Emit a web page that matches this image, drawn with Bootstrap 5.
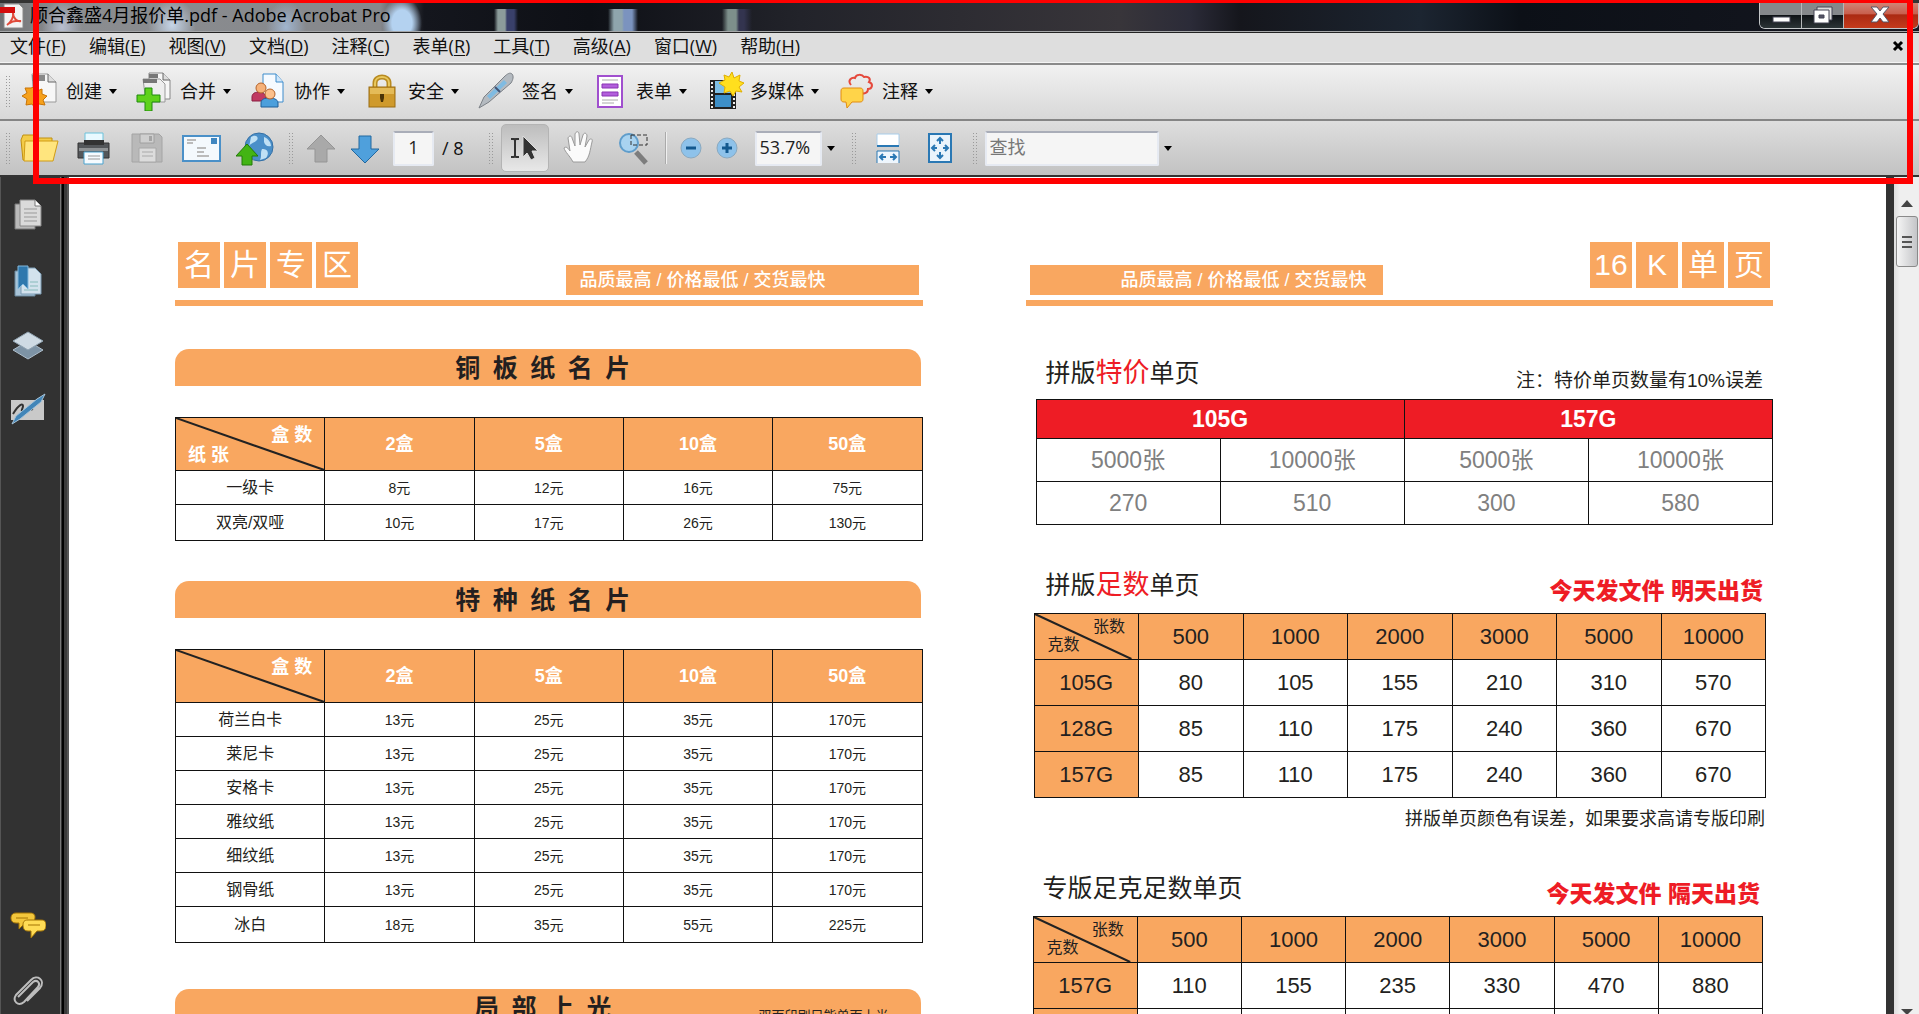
<!DOCTYPE html>
<html lang="zh-CN">
<head>
<meta charset="utf-8">
<meta name="viewport" content="width=device-width, initial-scale=1">
<title>顺合鑫盛4月报价单.pdf - Adobe Acrobat Pro</title>
<link rel="stylesheet" href="https://cdn.jsdelivr.net/npm/bootstrap@5.3.0/dist/css/bootstrap.min.css">
<style>
  :root { --orange: #f9a760; --ink: #231f20; --red: #ee1c25; }
  body { font-family: "Open Sans", "Noto Sans CJK SC", sans-serif; font-size: 18px; line-height: 24px; color: #111; background: #323232; }
  button { color: inherit; }
  .icon-btn { width: 40px; height: 40px; }
  .icon-btn svg, .menu-tool svg { display: block; width: 40px; height: 40px; flex: none; }

  /* window title */
  .title-strip {
    height: 33px; border-top: 3px solid #333; border-bottom: 1px solid #222; box-shadow: inset 0 -1px #a5a7a9;
    background:
      radial-gradient(ellipse 20px 26px at 62px 24px, #c3cbe0cc, transparent),
      radial-gradient(ellipse 24px 26px at 172px 22px, #cfe0f5dd, transparent),
      radial-gradient(ellipse 20px 26px at 286px 24px, #a9c4e6bb, transparent),
      radial-gradient(ellipse 20px 26px at 402px 20px, #b4d2f0 50%, transparent),
      linear-gradient(90deg, transparent 494px, #8c9c9b 498px 505px, #39406a 507px 514px, transparent 518px) 0 6px no-repeat,
      linear-gradient(90deg, transparent 608px, #8fa5ad 614px 622px, #7b93bf 624px 632px, transparent 638px) 0 6px no-repeat,
      linear-gradient(90deg, transparent 722px, #7d8f8b 728px 736px, #33344f 739px 744px, transparent 752px) 0 6px no-repeat,
      linear-gradient(90deg, #6f7173 0, #8b8d90 60px, #86888c 380px, #14161d 424px, #0e1016 590px, #22232a 800px, #38353a 1120px, #2b2b38 1190px, #15161c 1240px, #1c2531 1420px, #0c1017 1520px, #151720 100%);
  }
  .win-controls { height: 26px; border: 1px solid #c3c6c8; border-top: 0; border-radius: 0 0 6px 6px; overflow: hidden; }
  .win-controls button { width: 42px; background: linear-gradient(#85888b 0 46%, #0e1216 48%, #2c3436); border-right: 1px solid #b5b8ba !important; }
  .win-controls .win-close { width: 74px; background: linear-gradient(#d08375 0, #c9604e 42%, #ab2a12 48%, #c43a1c); border: 0 !important; }

  /* bars */
  .menu-strip { height: 30px; background: #dedede; border-bottom: 1px solid #f4f4f4; gap: 23px; padding: 0 10px 3px; }
  .menu-strip u { text-underline-offset: 2px; }
  .bar-one { height: 56px; border-top: 2px solid #8a8a8a; background: linear-gradient(#f1f1f1, #d8d8d8); padding: 0 0 2px 5px; }
  .bar-two { height: 58px; border-top: 2px solid #858585; border-bottom: 2px solid #333; background: linear-gradient(#dedede, #c2c2c2); padding-left: 5px; }
  .grip { width: 5px; height: 32px; flex: none; background: radial-gradient(circle, #9a9a9a 0 1px, transparent 1px) 0 0 / 3px 3px; }
  .menu-tool { gap: 6px; }
  .tool-row { gap: 17px; margin-left: 10px; }
  .file-row { gap: 14px; margin: 0 12px 0 10px; }
  .view-row { gap: 12px; }
  .caret { width: 0; height: 0; border: 4px solid transparent; border-top: 5px solid #000; border-bottom: 0; margin-left: 1px; }
  .bar-field { height: 35px; border: 2px solid #e6eaf2; border-top-color: #a9adb8; border-radius: 2px; background: #f5f5f5; color: #222; font-size: 18px; padding: 0 3px 3px; }
  .bar-field::placeholder { color: #777; opacity: 1; }
  .page-field { width: 41px; }
  .zoom-field { width: 67px; }
  .find-field { width: 174px; }
  .tool-on { width: 48px; height: 48px; border: 1px solid #b4b4b4 !important; border-radius: 5px; background: linear-gradient(#bdbdbd, #e8e8e8); }
  .small-btn, .small-btn svg { width: 24px; height: 24px; display: block; }
  .divide { width: 2px; height: 32px; background: linear-gradient(90deg, #aaa 50%, #f0f0f0 50%); }

  /* highlight frame drawn over the bars */
  .frame-mark { left: 33px; right: 6px; top: 0; height: 184px; border: 6px solid #f00; border-top-width: 3px; pointer-events: none; z-index: 5; }

  /* body */
  .work-area { min-height: 0; }
  .side-rail { width: 69px; background: linear-gradient(90deg, #555 1px, #323232 1px 60px, #777 60px 61px, #323232 61px 62px, #000 62px 64px, #3a3a3a 64px 67px, #555 67px); padding: 17px 29px 3px 8px; }
  .side-rail .icon-btn svg { width: 38px; height: 38px; }
  .side-rail .icon-btn { width: 38px; }
  .scroll-track { width: 33px; background: linear-gradient(90deg, #323232 8px, #ddd 8px, #efefef 14px); padding: 22px 1px 0 10px; }
  .scroll-thumb { height: 51px; border: 1px solid #8a8a8a; border-radius: 3px; background: linear-gradient(90deg, #f5f5f5, #c4c5c8); }

  /* price sheet */
  .sheet { color: var(--ink); padding: 64px 113px 0 106px; gap: 103px; font-family: "Liberation Sans Narrow", "Liberation Sans", "Noto Sans CJK SC", sans-serif; }
  .sheet-half { flex: 1 1 0; min-width: 0; }
  .sheet-top { height: 65px; border-bottom: 6px solid var(--orange); }
  .tiles { gap: 4px; margin: 1px 3px 0; }
  .tiles span { width: 42px; height: 46px; background: var(--orange); color: #fff; font-size: 30px; }
  .slogan { height: 30px; background: var(--orange); color: #fff; font-size: 18px; font-weight: 500; width: 353px; padding: 0 16px 0 14px; }
  .banner { height: 37px; margin: 43px 2px 0 0; padding-right: 10px; border-radius: 14px 14px 0 0; background: var(--orange); font-size: 25px; font-weight: 700; }
  .price { width: 100%; table-layout: fixed; text-align: center; border-collapse: collapse; }
  .price th, .price td { border: 1px solid #111; padding: 0; font-weight: 400; vertical-align: middle; }
  .cards { margin-top: 31px; font-size: 14px; line-height: 18px; }
  .cards + .banner { margin-top: 40px; }
  .cards + .banner.polish { margin-top: 46px; }
  .cards tbody tr { height: 34px; }
  .cards tbody tr:last-child { height: 36px; }
  .cards td:first-child { font-size: 16px; }
  .cards thead tr { height: 53px; }
  .cards thead th { background: var(--orange); color: #fff; font-size: 18px; font-weight: 700; }
  .leaflet { font-size: 22px; }
  .leaflet thead th, .leaflet tbody th { background: var(--orange); }
  .leaflet tr { height: 46px; }
  .deal { font-size: 23px; color: #808080; }
  .deal tr { height: 43px; }
  .deal thead tr { height: 39px; }
  .deal thead th { background: var(--red); color: #fff; font-weight: 700; }
  .split-box { position: relative; }
  .split-box svg { position: absolute; inset: 0; width: 100%; height: 100%; }
  .split-box span { display: block; line-height: 20px; }
  .cards .split-box { height: 52px; padding: 7px 12px; }
  .leaflet .split-box { height: 45px; padding: 4px 13px; font-size: 16px; }
  .leaflet .split-box span { line-height: 18px; }
  .polish-note { font-size: 13px; line-height: 20px; margin-right: 32px; }
  .deal-wrap { margin-left: 10px; }
  .quick-wrap { margin: 0 7px 0 8px; }
  .solo-wrap { margin: 0 10px 0 7px; }
  .head-deal { margin: 51px 10px 2px 20px; }
  .head-quick { margin: 44px 10px 0 20px; }
  .head-solo { margin: 41px 13px 0 17px; }
  .sub-head { font-size: 25px; line-height: 32px; margin: 0 0 12px; font-weight: 400; }
  .head-deal .sub-head { margin-bottom: 8px; }
  .sub-head em { font-style: normal; color: var(--red); font-size: 27px; }
  .note-text { font-size: 19px; line-height: 24px; }
  .foot-note { font-size: 18px; line-height: 24px; margin: 9px 8px 0 0; }
  .rush { font-size: 23px; line-height: 28px; font-weight: 900; color: var(--red); }
</style>
</head>
<body>
<div class="vh-100 d-flex flex-column overflow-hidden position-relative">

  <header class="flex-shrink-0">
    <div class="title-strip d-flex align-items-start">
      <svg class="flex-shrink-0" width="26" height="28" viewBox="0 0 26 28" aria-hidden="true"><path d="M4 1h15l4 4v20H4z" fill="#f3f3f3" stroke="#888"/><path d="M0 4h15v6H0z" fill="#d40d0d"/><path d="M7 22c4-3 7-8 6-12m0 0c0 5 4 9 8 8m-13 3c4-3 8-4 13-3" fill="none" stroke="#e04a3a" stroke-width="2"/></svg>
      <div class="ms-1 text-black">顺合鑫盛4月报价单.pdf - Adobe Acrobat Pro</div>
      <div class="win-controls d-flex ms-auto flex-shrink-0">
        <button class="border-0 p-0" aria-label="最小化"><svg width="42" height="25"><rect x="13" y="12" width="17" height="5" fill="#fff" stroke="#445"/></svg></button>
        <button class="border-0 p-0" aria-label="还原"><svg width="42" height="25"><g stroke="#445"><path d="M15 2h15v13H15z" fill="#ddd"/><path d="M12 5h15v13H12z" fill="#fff"/><path d="M17 10h5v3h-5z" fill="#556"/></g></svg></button>
        <button class="win-close p-0" aria-label="关闭"><svg width="74" height="25"><path d="M27 2h6l3 4 3-4h6l-6 7 6 8h-6l-3-4-3 4h-6l6-8z" fill="#fff" stroke="#556"/></svg></button>
      </div>
    </div>

    <nav class="menu-strip d-flex align-items-center" aria-label="菜单">
      <button class="border-0 bg-transparent p-0">文件(<u>F</u>)</button>
      <button class="border-0 bg-transparent p-0">编辑(<u>E</u>)</button>
      <button class="border-0 bg-transparent p-0">视图(<u>V</u>)</button>
      <button class="border-0 bg-transparent p-0">文档(<u>D</u>)</button>
      <button class="border-0 bg-transparent p-0">注释(<u>C</u>)</button>
      <button class="border-0 bg-transparent p-0">表单(<u>R</u>)</button>
      <button class="border-0 bg-transparent p-0">工具(<u>T</u>)</button>
      <button class="border-0 bg-transparent p-0">高级(<u>A</u>)</button>
      <button class="border-0 bg-transparent p-0">窗口(<u>W</u>)</button>
      <button class="border-0 bg-transparent p-0">帮助(<u>H</u>)</button>
      <button class="border-0 bg-transparent p-0 ms-auto me-1" aria-label="关闭文档"><svg class="d-block" width="14" height="12"><path d="M3 2l8 8m0-8l-8 8" stroke="#000" stroke-width="3"/></svg></button>
    </nav>

    <div class="bar-one d-flex align-items-center" role="toolbar" aria-label="任务">
      <span class="grip"></span>
      <div class="tool-row d-flex">
        <button class="menu-tool border-0 bg-transparent p-0 d-flex align-items-center">
          <svg viewBox="0 0 40 40"><path d="M12 3h16l8 8v20H14z" fill="#f7f7f7" stroke="#999"/><path d="M28 3v8h8" fill="#ddd" stroke="#666"/><path d="M12 4h13v6H12z" fill="#888"/><path d="M14 16l3 4 5-2v5l5 2-4 4 2 5-6-1-4 4-3-4-6 1 1-6-5-3 5-3-2-5 6 0z" fill="#f6a11c" stroke="#c87406"/></svg>
          <span>创建</span><i class="caret"></i></button>
        <button class="menu-tool border-0 bg-transparent p-0 d-flex align-items-center">
          <svg viewBox="0 0 40 40"><path d="M15 2h14l7 7v19H15z" fill="#f7f7f7" stroke="#888"/><path d="M29 2v7h7" fill="#ddd" stroke="#666"/><path d="M9 8h17l5 5v18H12z" fill="#eee" stroke="#999"/><path d="M15 3h9v4h-9zM9 8h14v4H9z" fill="#777"/><path d="M11 17h7v7h8v7h-8v9h-7v-9H3v-7h8z" fill="#5fd21a" stroke="#1e8a0c"/></svg>
          <span>合并</span><i class="caret"></i></button>
        <button class="menu-tool border-0 bg-transparent p-0 d-flex align-items-center">
          <svg viewBox="0 0 40 40"><path d="M15 3h13l7 8v20H15z" fill="#f5faff" stroke="#3c8ccc"/><path d="M28 3v8h7" fill="#cfe6fa" stroke="#3c8ccc"/><path d="M4 30v-4c0-4 4-5 7-5s7 2 7 5v4z" fill="#c03a62" stroke="#8a1f42"/><circle cx="13" cy="17" r="5" fill="#f6b27a" stroke="#b5632a"/><path d="M13 36v-4c0-4 4-5 8-5s9 1 9 5v4z" fill="#4b9fdc" stroke="#1f5f99"/><circle cx="22" cy="23" r="5" fill="#fbc08c" stroke="#b5632a"/></svg>
          <span>协作</span><i class="caret"></i></button>
        <button class="menu-tool border-0 bg-transparent p-0 d-flex align-items-center">
          <svg viewBox="0 0 40 40"><path d="M13 18v-6c0-8 14-8 14 0v6" fill="none" stroke="#b88a20" stroke-width="5"/><path d="M13 18v-6c0-8 14-8 14 0v6" fill="none" stroke="#e8c75c" stroke-width="2"/><rect x="7" y="16" width="26" height="20" fill="#cf9a2c" stroke="#9a6c12"/><path d="M8 17h24v6H8z" fill="#e4bb58"/><path d="M18 23h4v4l-1 4h-2l-1-4z" fill="#4a3306"/></svg>
          <span>安全</span><i class="caret"></i></button>
        <button class="menu-tool border-0 bg-transparent p-0 d-flex align-items-center">
          <svg viewBox="0 0 40 40"><path d="M36 3c2 2 1 6-1 9L13 31 3 37l5-11L28 6c3-3 6-5 8-3z" fill="#b4bac0" stroke="#7c8187"/><path d="M28 9l3 3-17 16-3-3z" fill="#7fbbe2"/><path d="M19 16l5 5" stroke="#457" stroke-width="2"/></svg>
          <span>签名</span><i class="caret"></i></button>
        <button class="menu-tool border-0 bg-transparent p-0 d-flex align-items-center">
          <svg viewBox="0 0 40 40"><rect x="8" y="5" width="24" height="31" fill="#fff" stroke="#a04fce" stroke-width="2"/><path d="M12 9h16M12 29h16M12 32h12" stroke="#aaa"/><path d="M12 13h16v4H12zM12 21h16v4H12z" fill="#b25fdc" stroke="#8a35b4"/></svg>
          <span>表单</span><i class="caret"></i></button>
        <button class="menu-tool border-0 bg-transparent p-0 d-flex align-items-center">
          <svg viewBox="0 0 40 40"><path d="M6 9h26v29H6z" fill="#222"/><path d="M11 10h16v12H11z" fill="#7fc0e6"/><path d="M11 24h16v12H11z" fill="#3d8fc8"/><path d="M8 11v26M30 11v26" stroke="#eee" stroke-width="2" stroke-dasharray="2 2"/><path d="M28 1l2 6 6-3-1 6 5 2-5 4 3 5-6-1-3 5-3-5-6 2 1-6-6-4 6-3-1-5 5 2z" fill="#ffdf1e" stroke="#e0ae00"/></svg>
          <span>多媒体</span><i class="caret"></i></button>
        <button class="menu-tool border-0 bg-transparent p-0 d-flex align-items-center">
          <svg viewBox="0 0 40 40"><path d="M15 14c-4-5 1-8 4-7 1-4 7-4 9-1 5-1 7 2 5 5 5 2 3 7-1 7 0 4-4 5-6 4" fill="none" stroke="#e5493c" stroke-width="2"/><path d="M8 17h16c2 0 3 1 3 3v8c0 2-1 3-3 3h-8l-5 6-1-6H8c-2 0-3-1-3-3v-8c0-2 1-3 3-3z" fill="#ffd449" stroke="#e28c10"/></svg>
          <span>注释</span><i class="caret"></i></button>
      </div>
    </div>

    <div class="bar-two d-flex align-items-center" role="toolbar" aria-label="工具">
      <span class="grip"></span>
      <div class="file-row d-flex">
        <button class="icon-btn border-0 bg-transparent p-0" aria-label="打开"><svg viewBox="0 0 40 40"><path d="M1 12l2-5h11l2 3h16v5l-2 17H3z" fill="#f3cc48" stroke="#c0900f"/><path d="M5 13h33l-5 20H4z" fill="#ffe57e" stroke="#d19c14"/></svg></button>
        <button class="icon-btn border-0 bg-transparent p-0" aria-label="打印"><svg viewBox="0 0 40 40"><path d="M11 5h18v12H11z" fill="#e9f9ff" stroke="#6cc3dc"/><path d="M4 15h31v15H4z" fill="#54575a" stroke="#333"/><path d="M10 12h20v5H10z" fill="#333"/><path d="M5 20h29v3H5z" fill="#8f9294"/><path d="M10 24h19v12H10z" fill="#f6fbff" stroke="#4aa3cf"/><path d="M14 28h12m-12 3h12" stroke="#999"/></svg></button>
        <button class="icon-btn border-0 bg-transparent p-0" aria-label="保存" disabled><svg viewBox="0 0 40 40"><path d="M4 6h27l3 3v25H4z" fill="#b9b9b9" stroke="#a4a4a4"/><path d="M12 6h14v9H12z" fill="#cfcfcf" stroke="#a0a0a0"/><path d="M21 8h3v5h-3z" fill="#a4a4a4"/><path d="M11 20h17v14H11z" fill="#dcdcdc" stroke="#a8a8a8"/><path d="M14 24h11m-11 4h11" stroke="#aaa"/></svg></button>
        <button class="icon-btn border-0 bg-transparent p-0" aria-label="邮件"><svg viewBox="0 0 40 40"><rect x="1" y="8" width="37" height="25" fill="#f4f9fd" stroke="#4a90c8" stroke-width="2"/><path d="M29 10h6v6h-6z" fill="#3f86c0"/><path d="M5 12h9m-9 3h6M15 20h9m-9 4h7m-7 4h12" stroke="#bbb" stroke-width="2"/></svg></button>
        <button class="icon-btn border-0 bg-transparent p-0" aria-label="上传"><svg viewBox="0 0 40 40"><circle cx="23" cy="19" r="14" fill="#4a8fc9" stroke="#3570a5"/><path d="M15 9c5-3 8 0 6 3s-7 3-8 7zM28 9c5 2 7 6 7 9-4 1-6-1-7-4zM26 21c5 0 8 3 4 9l-6 2c2-4 0-7 2-11z" fill="#bfe0f5"/><path d="M11 16l11 12h-6v9H6v-9H0z" fill="#43b414" stroke="#237a06"/></svg></button>
      </div>
      <span class="grip"></span>
      <button class="icon-btn border-0 bg-transparent p-0 ms-2" aria-label="上一页" disabled><svg viewBox="0 0 40 40"><path d="M20 7l14 14h-8v13H14V21H6z" fill="#a9a9a9" stroke="#959595"/></svg></button>
      <button class="icon-btn border-0 bg-transparent p-0 ms-1 me-2" aria-label="下一页"><svg viewBox="0 0 40 40"><path d="M20 35L6 21h8V8h12v13h8z" fill="#4fa0dc" stroke="#23689f"/></svg></button>
      <input class="bar-field page-field text-center" aria-label="页码" value="1"><span class="ms-2">/ 8</span>
      <span class="grip ms-4 me-2"></span>
      <div class="view-row d-flex align-items-center">
        <button class="tool-on p-0" aria-label="选择"><svg class="d-block mx-auto" width="40" height="40" viewBox="0 0 40 40"><path d="M6 11h3l1 1 1-1h3M10 12v16M6 29h3l1-1 1 1h3" fill="none" stroke="#333" stroke-width="2"/><path d="M18 8v21l4-4 4 7 4-2-3-7h6z" fill="#333" stroke="#ddd"/></svg></button>
        <button class="icon-btn border-0 bg-transparent p-0" aria-label="手形"><svg viewBox="0 0 40 40"><path d="M12 34c-3-6-8-10-9-14 2-2 4 0 6 3L7 10c1-3 4-2 4 0l3 8V6c1-3 4-3 4 0l1 11 3-10c1-3 4-2 4 1l-2 11 4-7c2-2 4-1 3 2-2 8-2 14-7 20z" fill="#fbfbfb" stroke="#9a9a9a"/></svg></button>
        <button class="icon-btn border-0 bg-transparent p-0" aria-label="选框缩放"><svg viewBox="0 0 40 40"><path d="M23 24l10 11" stroke="#7d7d7d" stroke-width="5"/><circle cx="16" cy="15" r="9" fill="#a9d3f0" stroke="#5f9dcb" stroke-width="2"/><path d="M18 7h16v10H18z" fill="none" stroke="#333" stroke-dasharray="4 2"/></svg></button>
        <span class="divide"></span>
        <button class="small-btn border-0 bg-transparent p-0" aria-label="缩小"><svg viewBox="0 0 24 24"><circle cx="12" cy="12" r="10" fill="#8ec2ea" stroke="#8aa9c0"/><path d="M7 12h10" stroke="#12588f" stroke-width="3"/></svg></button>
        <button class="small-btn border-0 bg-transparent p-0" aria-label="放大"><svg viewBox="0 0 24 24"><circle cx="12" cy="12" r="10" fill="#8ec2ea" stroke="#8aa9c0"/><path d="M7 12h10M12 7v10" stroke="#12588f" stroke-width="3"/></svg></button>
        <input class="bar-field zoom-field ms-1" aria-label="缩放比例" value="53.7%">
      </div>
      <button class="border-0 bg-transparent p-0 ms-1" aria-label="缩放选项"><i class="caret d-block"></i></button>
      <div class="view-row d-flex align-items-center ms-3">
        <span class="grip"></span>
        <button class="icon-btn border-0 bg-transparent p-0" aria-label="适合宽度"><svg viewBox="0 0 40 40"><path d="M9 6h22v12H9z" fill="#fff" stroke="#a8cdea"/><path d="M9 18h22" stroke="#2a78b4" stroke-width="2"/><path d="M9 35V23h22v12" fill="#eef6fd" stroke="#2a78b4"/><path d="M12 29h6m4 0h6M15 26l-3 3 3 3m10-6l3 3-3 3" fill="none" stroke="#2a78b4" stroke-width="2"/></svg></button>
        <button class="icon-btn border-0 bg-transparent p-0" aria-label="适合页面"><svg viewBox="0 0 40 40"><path d="M9 6h22v28H9z" fill="#eaf4fc" stroke="#2a78b4" stroke-width="2"/><path d="M20 10v6m0 8v6M12 20h5m6 0h5M17 13l3-3 3 3m-6 14l3 3 3-3m-8-10l-3 3 3 3m10-6l3 3-3 3" fill="none" stroke="#2a78b4" stroke-width="2"/></svg></button>
        <span class="grip"></span>
      </div>
      <input class="bar-field find-field ms-2" type="search" aria-label="查找" placeholder="查找">
      <button class="border-0 bg-transparent p-0 ms-1" aria-label="查找选项"><i class="caret d-block"></i></button>
    </div>
  </header>
  <div class="frame-mark position-absolute"></div>

  <div class="work-area flex-grow-1 d-flex overflow-hidden">
    <aside class="side-rail flex-shrink-0 d-flex flex-column gap-4">
      <button class="icon-btn border-0 bg-transparent p-0" aria-label="页面"><svg viewBox="0 0 38 38"><path d="M7 9h20v25H7z" fill="#b9b9b9" stroke="#777"/><path d="M12 5h15l6 6v20H12z" fill="#dadada" stroke="#888"/><path d="M27 5v6h6" fill="#fff" stroke="#777"/><path d="M16 14h13m-13 4h13m-13 4h13m-13 4h13" stroke="#999"/></svg></button>
      <button class="icon-btn border-0 bg-transparent p-0 mt-1" aria-label="书签"><svg viewBox="0 0 38 38"><path d="M7 8h20v25H7z" fill="#a9c4d8" stroke="#68879c"/><path d="M13 5h14l6 6v20H13z" fill="#d3e2ed" stroke="#7d9db5"/><path d="M22 19h8m-8 4h8m-14 4h14" stroke="#8bb"/><path d="M10 3h10v23l-5-5-5 5z" fill="#2f78ad" stroke="#83b8dc"/></svg></button>
      <button class="icon-btn border-0 bg-transparent p-0" aria-label="图层"><svg viewBox="0 0 38 38"><path d="M20 14l15 9-15 9-15-9z" fill="#7d93a5" stroke="#aebecb"/><path d="M20 5l15 9-15 9-15-9z" fill="#cfdbe4" stroke="#90a3b1"/></svg></button>
      <button class="icon-btn border-0 bg-transparent p-0" aria-label="签名"><svg viewBox="0 0 38 38"><path d="M3 9h33v20H3z" fill="#c9c9c9"/><path d="M5 23c6-10 10-11 10-8s-4 6 2 5l8-2" fill="none" stroke="#333" stroke-width="2"/><path d="M37 3l-4 8L12 28 4 33l4-8L29 8z" fill="#4185b8" stroke="#a6c3d8"/></svg></button>
      <button class="icon-btn border-0 bg-transparent p-0 mt-auto" aria-label="注释"><svg viewBox="0 0 38 38"><path d="M8 5h14c4 0 5 2 5 4s-1 6-5 6h-5l-6 6v-6H8c-4 0-5-3-5-5s1-5 5-5z" fill="#f3c73c" stroke="#a47405"/><path d="M20 12h13c4 0 5 2 5 5s-1 6-5 6h-4l-6 7v-7h-3c-4 0-5-3-5-6s1-5 5-5z" fill="#ffdc55" stroke="#a47405"/><path d="M8 10h12M20 17h12" stroke="#a47405"/></svg></button>
      <button class="icon-btn border-0 bg-transparent p-0" aria-label="附件"><svg viewBox="0 0 38 38"><path d="M10 25L25 10c4-3 8 1 5 5L16 30c-6 5-12-1-8-7L23 8c6-6 15 0 9 8L19 29" fill="none" stroke="#bdbdbd" stroke-width="2"/></svg></button>
    </aside>

    <main class="sheet bg-white flex-grow-1 d-flex overflow-hidden">
      <section class="sheet-half">
        <div class="sheet-top d-flex justify-content-between">
          <div class="tiles d-flex"><span class="d-flex align-items-center justify-content-center">名</span><span class="d-flex align-items-center justify-content-center">片</span><span class="d-flex align-items-center justify-content-center">专</span><span class="d-flex align-items-center justify-content-center">区</span></div>
          <div class="slogan mt-4 me-1 d-flex align-items-center"><span>品质最高 / 价格最低 / 交货最快</span></div>
        </div>
        <h2 class="banner d-flex align-items-center justify-content-center">铜&ensp;板&ensp;纸&ensp;名&ensp;片</h2>
        <table class="price cards">
          <thead><tr><th><div class="split-box"><svg preserveAspectRatio="none" viewBox="0 0 148 51"><path d="M0 0L148 51" stroke="#222" stroke-width="2"/></svg><span class="text-end">盒 数</span><span class="text-start">纸 张</span></div></th><th>2盒</th><th>5盒</th><th>10盒</th><th>50盒</th></tr></thead>
          <tbody>
            <tr><td>一级卡</td><td>8元</td><td>12元</td><td>16元</td><td>75元</td></tr>
            <tr><td>双亮/双哑</td><td>10元</td><td>17元</td><td>26元</td><td>130元</td></tr>
          </tbody>
        </table>
        <h2 class="banner d-flex align-items-center justify-content-center">特&ensp;种&ensp;纸&ensp;名&ensp;片</h2>
        <table class="price cards">
          <thead><tr><th><div class="split-box"><svg preserveAspectRatio="none" viewBox="0 0 148 51"><path d="M0 0L148 51" stroke="#222" stroke-width="2"/></svg><span class="text-end">盒 数</span></div></th><th>2盒</th><th>5盒</th><th>10盒</th><th>50盒</th></tr></thead>
          <tbody>
            <tr><td>荷兰白卡</td><td>13元</td><td>25元</td><td>35元</td><td>170元</td></tr>
            <tr><td>莱尼卡</td><td>13元</td><td>25元</td><td>35元</td><td>170元</td></tr>
            <tr><td>安格卡</td><td>13元</td><td>25元</td><td>35元</td><td>170元</td></tr>
            <tr><td>雅纹纸</td><td>13元</td><td>25元</td><td>35元</td><td>170元</td></tr>
            <tr><td>细纹纸</td><td>13元</td><td>25元</td><td>35元</td><td>170元</td></tr>
            <tr><td>钢骨纸</td><td>13元</td><td>25元</td><td>35元</td><td>170元</td></tr>
            <tr><td>冰白</td><td>18元</td><td>35元</td><td>55元</td><td>225元</td></tr>
          </tbody>
        </table>
        <div class="banner polish d-flex align-items-center position-relative justify-content-center"><span>局&ensp;部&ensp;上&ensp;光</span><span class="polish-note position-absolute end-0 bottom-0 fw-normal">双面印刷只能单面上光</span></div>
      </section>

      <section class="sheet-half">
        <div class="sheet-top d-flex justify-content-between">
          <div class="slogan mt-4 ms-1 d-flex align-items-center justify-content-end"><span>品质最高 / 价格最低 / 交货最快</span></div>
          <div class="tiles d-flex"><span class="d-flex align-items-center justify-content-center">16</span><span class="d-flex align-items-center justify-content-center">K</span><span class="d-flex align-items-center justify-content-center">单</span><span class="d-flex align-items-center justify-content-center">页</span></div>
        </div>
        <div class="head-deal d-flex justify-content-between align-items-end"><h3 class="sub-head">拼版<em>特价</em>单页</h3><span class="note-text mb-1">注：特价单页数量有10%误差</span></div>
        <div class="deal-wrap"><table class="price deal">
          <thead><tr><th colspan="2">105G</th><th colspan="2">157G</th></tr></thead>
          <tbody><tr><td>5000张</td><td>10000张</td><td>5000张</td><td>10000张</td></tr><tr><td>270</td><td>510</td><td>300</td><td>580</td></tr></tbody>
        </table></div>
        <div class="head-quick d-flex justify-content-between align-items-end"><h3 class="sub-head">拼版<em>足数</em>单页</h3><span class="rush mb-2">今天发文件 明天出货</span></div>
        <div class="quick-wrap"><table class="price leaflet">
          <thead><tr><th><div class="split-box"><svg preserveAspectRatio="none" viewBox="0 0 103 44"><path d="M0 0L96 44" stroke="#222" stroke-width="2"/></svg><span class="text-end">张数</span><span class="text-start">克数</span></div></th><th>500</th><th>1000</th><th>2000</th><th>3000</th><th>5000</th><th>10000</th></tr></thead>
          <tbody>
            <tr><th>105G</th><td>80</td><td>105</td><td>155</td><td>210</td><td>310</td><td>570</td></tr>
            <tr><th>128G</th><td>85</td><td>110</td><td>175</td><td>240</td><td>360</td><td>670</td></tr>
            <tr><th>157G</th><td>85</td><td>110</td><td>175</td><td>240</td><td>360</td><td>670</td></tr>
          </tbody>
        </table></div>
        <p class="foot-note text-end">拼版单页颜色有误差，如果要求高请专版印刷</p>
        <div class="head-solo d-flex justify-content-between align-items-end"><h3 class="sub-head">专版足克足数单页</h3><span class="rush mb-2">今天发文件 隔天出货</span></div>
        <div class="solo-wrap"><table class="price leaflet">
          <thead><tr><th><div class="split-box"><svg preserveAspectRatio="none" viewBox="0 0 103 44"><path d="M0 0L96 44" stroke="#222" stroke-width="2"/></svg><span class="text-end">张数</span><span class="text-start">克数</span></div></th><th>500</th><th>1000</th><th>2000</th><th>3000</th><th>5000</th><th>10000</th></tr></thead>
          <tbody>
            <tr><th>157G</th><td>110</td><td>155</td><td>235</td><td>330</td><td>470</td><td>880</td></tr>
            <tr><th></th><td></td><td></td><td></td><td></td><td></td><td></td></tr>
          </tbody>
        </table></div>
      </section>
    </main>

    <div class="scroll-track flex-shrink-0 d-flex flex-column">
      <svg class="d-block mx-auto mb-2" width="12" height="9"><path d="M6 1l6 7H0z" fill="#444"/></svg>
      <div class="scroll-thumb d-flex align-items-center justify-content-center"><svg width="12" height="14"><path d="M1 2h10M1 7h10M1 12h10" stroke="#555" stroke-width="2"/></svg></div>
      <svg class="d-block mx-auto mt-auto" width="12" height="5"><path d="M0 0h12L7 5H5z" fill="#444"/></svg>
    </div>
  </div>
</div>
<script src="https://cdn.jsdelivr.net/npm/bootstrap@5.3.0/dist/js/bootstrap.bundle.min.js"></script>
</body>
</html>
